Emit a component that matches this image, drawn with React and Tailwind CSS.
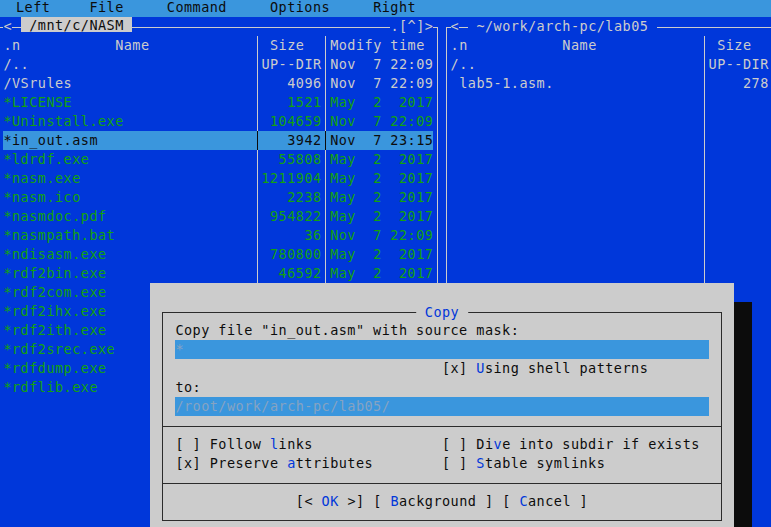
import React from 'react'

// terminal grid: one cell is 8.6px wide, one row 19px high
const leftFiles = [
  ['/..', 'UP--DIR', 'Nov  7 22:09', 'dir'],
  ['/VSrules', '4096', 'Nov  7 22:09', 'dir'],
  ['*LICENSE', '1521', 'May  2  2017', 'exe'],
  ['*Uninstall.exe', '104659', 'Nov  7 22:09', 'exe'],
  ['*in_out.asm', '3942', 'Nov  7 23:15', 'sel'],
  ['*ldrdf.exe', '55808', 'May  2  2017', 'exe'],
  ['*nasm.exe', '1211904', 'May  2  2017', 'exe'],
  ['*nasm.ico', '2238', 'May  2  2017', 'exe'],
  ['*nasmdoc.pdf', '954822', 'May  2  2017', 'exe'],
  ['*nasmpath.bat', '36', 'Nov  7 22:09', 'exe'],
  ['*ndisasm.exe', '780800', 'May  2  2017', 'exe'],
  ['*rdf2bin.exe', '46592', 'May  2  2017', 'exe'],
  ['*rdf2com.exe', '', '', 'exe'],
  ['*rdf2ihx.exe', '', '', 'exe'],
  ['*rdf2ith.exe', '', '', 'exe'],
  ['*rdf2srec.exe', '', '', 'exe'],
  ['*rdfdump.exe', '', '', 'exe'],
  ['*rdflib.exe', '', '', 'exe'],
]

const rightFiles = [
  ['/..', 'UP--DIR', '', 'dir'],
  [' lab5-1.asm.', '278', '', 'dir'],
]

const ROWS = 25

const VBar = ({ dark }) => (
  <div className="w-[8.6px] h-full shrink-0 flex justify-center">
    <div className={dark ? 'w-px h-full bg-[#0c0c0c]' : 'w-px h-full bg-[#cccccc]'} />
  </div>
)

const HLine = () => <div className="flex-1 h-px mt-[10px] bg-[#cccccc]" />

const CornerL = () => (
  <div className="w-[8.6px] h-full shrink-0 flex flex-col">
    <div className="h-[10px]" />
    <div className="flex-1 ml-[3.8px] border-l border-t border-[#cccccc]" />
  </div>
)

const CornerR = () => (
  <div className="w-[8.6px] h-full shrink-0 flex flex-col">
    <div className="h-[10px]" />
    <div className="flex-1 mr-[3.8px] border-r border-t border-[#cccccc]" />
  </div>
)

// cut: the panel runs past the right edge of the screen, only name + size show
const FileRow = ({ file, cut }) => {
  const [name, size, date, kind] = file || ['', '', '', 'dir']
  const sel = kind === 'sel'
  const color = sel ? 'text-[#0c0c0c] bg-[#3a96dd]' : kind === 'exe' ? 'text-[#13a10e]' : 'text-[#cccccc]'
  return (
    <div className="flex h-[19px]">
      <VBar />
      <div className={`flex ${color}`}>
        <span className="w-[249.4px] overflow-hidden">{name}</span>
        <VBar dark={sel} />
        <span className="w-[60.2px]">{size.padStart(7)}</span>
        {!cut && <VBar dark={sel} />}
        {!cut && <span className="w-[103.2px]">{date}</span>}
      </div>
      {!cut && <VBar />}
    </div>
  )
}

const Panel = ({ path, active, files, cut }) => (
  <div className={cut ? 'flex-1 flex flex-col' : 'w-[447.2px] shrink-0 flex flex-col'}>
    <div className="flex h-[19px] text-[#cccccc]">
      <CornerL />
      <span>{'<'}</span>
      <div className="w-[8.6px] h-px mt-[10px] bg-[#cccccc]" />
      <span className={active ? 'h-[15.5px] leading-[16px] bg-[#cccccc] text-[#0c0c0c]' : ''}>{` ${path} `}</span>
      <HLine />
      {!cut && <span>{'.[^]>'}</span>}
      {!cut && <CornerR />}
    </div>
    <div className="flex h-[19px] text-[#cccccc]">
      <VBar />
      <span className="w-[249.4px]">{'.n           Name'}</span>
      <VBar />
      <span className="w-[60.2px]">{' Size'}</span>
      {!cut && <VBar />}
      {!cut && <span className="w-[103.2px]">{'Modify time'}</span>}
      {!cut && <VBar />}
    </div>
    {Array.from({ length: ROWS }).map((_, i) => (
      <FileRow key={i} file={files[i]} cut={cut} />
    ))}
  </div>
)

const Hot = ({ children }) => <span className="text-[#0037da]">{children}</span>

const DRow = ({ children }) => <div className="h-[19px] pl-[12.4px]">{children}</div>

const DSep = () => (
  <div className="h-[19px] flex">
    <div className="w-full h-px mt-[10px] bg-[#2b2b2b]" />
  </div>
)

const CopyDialog = () => (
  <div className="absolute left-[149.6px] top-[282.5px] w-[584.8px] h-[244.5px] bg-[#cccccc] text-[#0c0c0c]">
    <div className="relative mx-[12.4px] mt-[29px] border border-[#2b2b2b] pt-[8px] pb-[9px]">
      <div className="absolute top-[-10px] left-1/2 -translate-x-1/2 h-[19px] bg-[#cccccc] text-[#0037da]">{' Copy '}</div>
      <DRow>{'Copy file "in_out.asm" with source mask:'}</DRow>
      <DRow>
        <div className="w-[533.2px] h-[19px] bg-[#3a96dd] text-[#86a3c2]">*</div>
      </DRow>
      <DRow>
        {' '.repeat(31) + '[x] '}
        <Hot>U</Hot>
        {'sing shell patterns'}
      </DRow>
      <DRow>to:</DRow>
      <DRow>
        <div className="w-[533.2px] h-[19px] bg-[#3a96dd] text-[#86a3c2]">/root/work/arch-pc/lab05/</div>
      </DRow>
      <DSep />
      <DRow>
        {'[ ] Follow '}
        <Hot>l</Hot>
        {'inks' + ' '.repeat(15) + '[ ] Di'}
        <Hot>v</Hot>
        {'e into subdir if exists'}
      </DRow>
      <DRow>
        {'[x] Preserve '}
        <Hot>a</Hot>
        {'ttributes' + ' '.repeat(8) + '[ ] '}
        <Hot>S</Hot>
        {'table symlinks'}
      </DRow>
      <DSep />
      <div className="h-[19px] flex justify-center">
        <span>
          {'[< '}
          <Hot>OK</Hot>
          {' >] [ '}
          <Hot>B</Hot>
          {'ackground ] [ '}
          <Hot>C</Hot>
          {'ancel ]'}
        </span>
      </div>
    </div>
  </div>
)

export default function App() {
  return (
    <div className="relative w-[771px] h-[527px] overflow-hidden bg-[#0037da] whitespace-pre font-['DejaVu_Sans_Mono',monospace] text-[13.5px] leading-[19px] tracking-[0.47px]">
      <div className="flex h-[16.5px] bg-[#3a96dd] text-[#0c0c0c] leading-[14px]">
        <span className="ml-[16px]">Left</span>
        <span className="ml-[39px]">{'File     Command     Options     Right'}</span>
      </div>
      <div className="flex ml-[-5.2px] w-[776.2px]">
        <Panel path="/mnt/c/NASM" active files={leftFiles} />
        <Panel path="~/work/arch-pc/lab05" files={rightFiles} cut />
      </div>
      <CopyDialog />
      <div className="absolute left-[734.4px] top-[301.5px] w-[17.2px] h-[225.5px] bg-[#0c0c0c]" />
    </div>
  )
}
